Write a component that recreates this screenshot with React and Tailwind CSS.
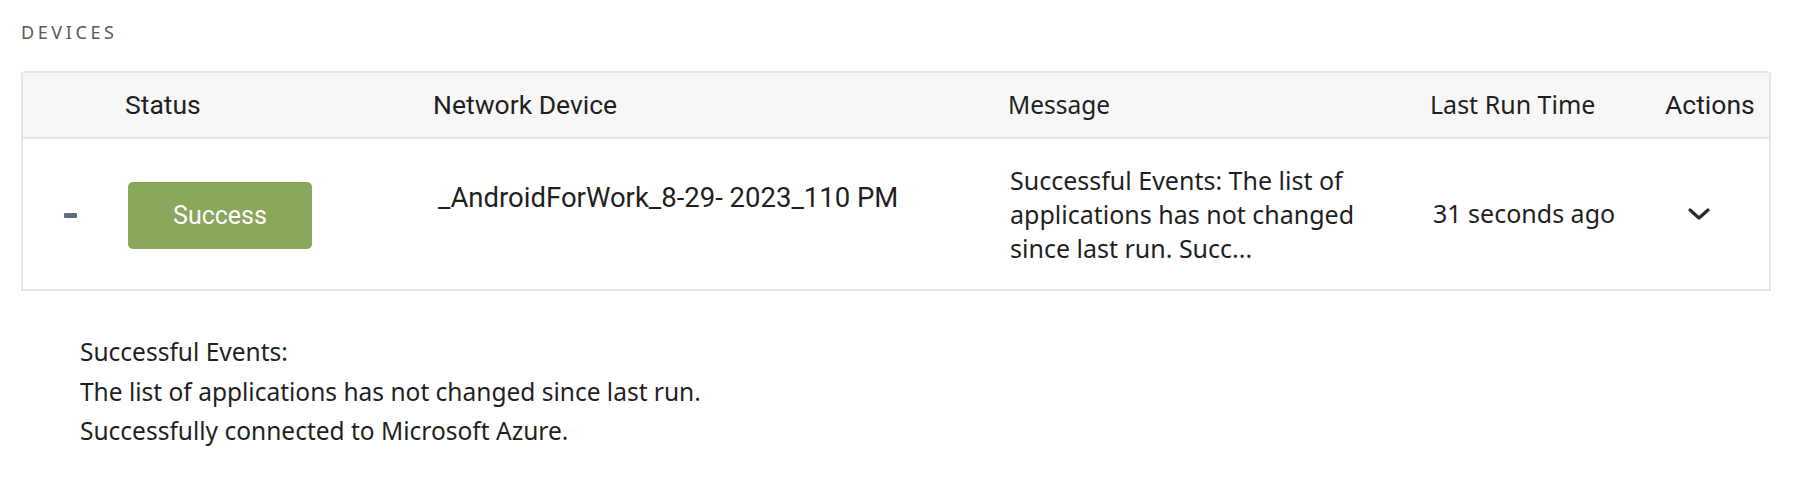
import React from "react";

const plex = { fontFamily: '"Noto Sans", "Liberation Sans", sans-serif' };
const roboto = { fontFamily: 'Roboto, "Liberation Sans", sans-serif' };

export default function App() {
  return (
    <div className="w-[1796px] h-[492px] bg-white text-[#1f1f1f]" style={plex}>
      <div className="pl-[21px] pr-[25px] pt-[20px]">
        <div className="text-[18px] leading-[24px] tracking-[3.6px] text-[#5a5a5a] uppercase">Devices</div>
        <div className="mt-[27px] border-2 border-[#e6e6e6] rounded-t-[4px]">
          <div className="grid grid-cols-[86px_308px_575px_422px_235px_1fr] h-[66px] items-center bg-[#f7f7f7] border-b-2 border-[#e6e6e6]">
            <div />
            <div className="pl-[16px] text-[26.5px]" style={roboto}>Status</div>
            <div className="pl-[16px] text-[26.5px]" style={roboto}>Network Device</div>
            <div className="pl-[16px] text-[24.5px]">Message</div>
            <div className="pl-[16px] text-[25px]">Last Run Time</div>
            <div className="pl-[16px] text-[26.5px]" style={roboto}>Actions</div>
          </div>
          <div className="grid grid-cols-[86px_308px_575px_422px_235px_1fr] h-[150px] items-center text-[25px]">
            <div className="flex justify-center pl-[8px] pt-[3px]">
              <div className="w-[13px] h-[5px] bg-[#5b6b80] rounded-[1px]" />
            </div>
            <div className="pl-[19px] pt-[3px]">
              <div className="w-[184px] h-[67px] rounded-[5px] bg-[#8aa65a] text-white flex items-center justify-center text-[25px]" style={roboto}>
                Success
              </div>
            </div>
            <div className="pl-[21px] self-start pt-[43px] leading-[32px] text-[27.5px]" style={roboto}>
              _AndroidForWork_8-29- 2023_110 PM
            </div>
            <div className="pl-[18px] pr-[8px] leading-[34px] max-w-[400px]">
              Successful Events: The list of applications has not changed since last run. Succ...
            </div>
            <div className="pl-[19px]">31 seconds ago</div>
            <div className="pl-[38px]">
              <svg width="24" height="14" viewBox="0 0 24 14" fill="none">
                <path d="M3 3 L12 11 L21 3" stroke="#2a2a2a" strokeWidth="3.2" strokeLinecap="round" strokeLinejoin="round" />
              </svg>
            </div>
          </div>
        </div>
        <div className="pl-[59px] pt-[41px] text-[24.5px] leading-[39.5px]">
          <div>Successful Events:</div>
          <div>The list of applications has not changed since last run.</div>
          <div>Successfully connected to Microsoft Azure.</div>
        </div>
      </div>
    </div>
  );
}
